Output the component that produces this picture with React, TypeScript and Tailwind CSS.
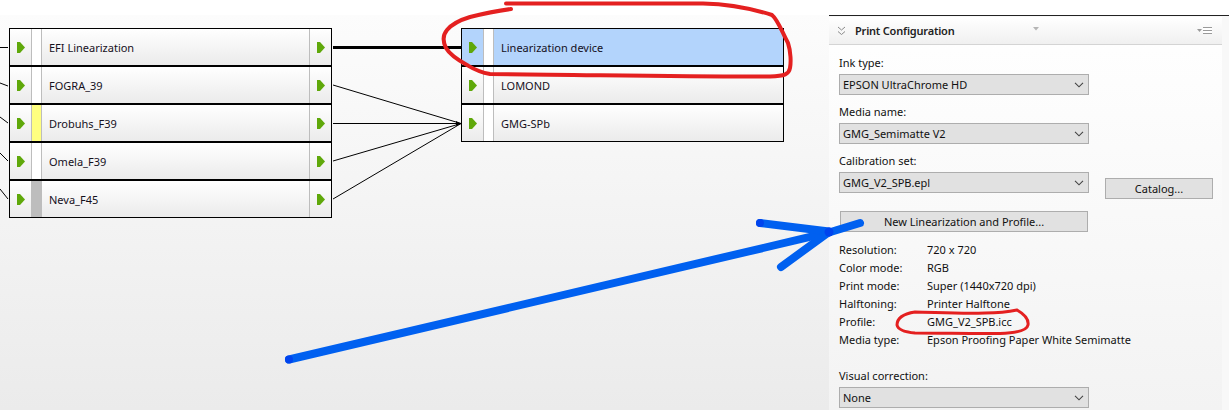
import React from "react";

const FONT = "font-['Noto_Sans','Liberation_Sans',sans-serif]";

type NodeRow = { name: string; swatch?: string; selected?: boolean };

const sourceRows: NodeRow[] = [
  { name: "EFI Linearization" },
  { name: "FOGRA_39" },
  { name: "Drobuhs_F39", swatch: "bg-[#ffff80]" },
  { name: "Omela_F39" },
  { name: "Neva_F45", swatch: "bg-[#bdbdbd]" },
];

const targetRows: NodeRow[] = [
  { name: "Linearization device", selected: true },
  { name: "LOMOND" },
  { name: "GMG-SPb" },
];

const infoRows = [
  ["Resolution:", "720 x 720"],
  ["Color mode:", "RGB"],
  ["Print mode:", "Super (1440x720 dpi)"],
  ["Halftoning:", "Printer Halftone"],
  ["Profile:", "GMG_V2_SPB.icc"],
  ["Media type:", "Epson Proofing Paper White Semimatte"],
];

const GreenArrow = () => (
  <svg width="8" height="11" viewBox="0 0 8 11" className="block">
    <path d="M0 0H3L8 5.5L3 11H0Z" fill="#5fa80a" />
  </svg>
);

const Chevron = () => (
  <svg width="10" height="6" viewBox="0 0 10 6" fill="none" className="block">
    <path d="M1 .8L5 4.8L9 .8" stroke="#444" strokeWidth="1.1" />
  </svg>
);

const NodeBlock = ({ rows, hasOutput, className }: { rows: NodeRow[]; hasOutput: boolean; className: string }) => (
  <div className={`absolute w-[323px] border border-black ${className}`}>
    {rows.map((row) => (
      <div
        key={row.name}
        className={`flex h-[38px] items-stretch border-t-2 border-black first:h-[36px] first:border-t-0 ${
          row.selected ? "bg-[#b3d4fc]" : "bg-gradient-to-b from-white to-[#ebebeb]"
        }`}
      >
        <div className="flex w-[21px] items-center justify-center pl-[1px]">
          <GreenArrow />
        </div>
        <div className={`w-[11px] border-x border-[#bdbdbd] ${row.swatch ?? "bg-white"}`} />
        <div className="flex flex-1 items-center pl-[7px] pt-[2px] text-[11px] text-[#15101c]">{row.name}</div>
        {hasOutput && (
          <div className="flex w-[22px] items-center justify-center border-l border-[#bdbdbd]">
            <GreenArrow />
          </div>
        )}
      </div>
    ))}
  </div>
);

const SelectBox = ({ value, className = "" }: { value: string; className?: string }) => (
  <div
    className={`flex h-[21px] w-[250px] items-center justify-between border border-[#adadad] bg-[#e1e1e1] pl-[3px] pr-[4px] text-[11px] text-[#111] ${className}`}
  >
    <span className="pt-[2px]">{value}</span>
    <Chevron />
  </div>
);

const FieldLabel = ({ children }: { children: React.ReactNode }) => (
  <div className="h-[18px] text-[11px] leading-[18px] text-[#111]">{children}</div>
);

const PanelHeader = () => (
  <div className="flex h-[28px] items-center border-b border-[#d4d4d4] bg-gradient-to-b from-white to-[#f0f0f0] pl-[8px] pr-[10px]">
    <svg width="9" height="10" viewBox="0 0 9 10" fill="none" className="block">
      <path d="M1 1L4.5 4L8 1M1 5.5L4.5 8.5L8 5.5" stroke="#8a8a8a" />
    </svg>
    <span className="ml-[9px] pt-[2px] text-[11px] font-semibold tracking-[-0.2px] text-[#222]">Print Configuration</span>
    <svg width="6" height="4" viewBox="0 0 6 4" className="ml-[78px] -mt-[4px] block">
      <path d="M0 0H6L3 3.5Z" fill="#b5b5b5" />
    </svg>
    <div className="ml-auto flex items-center gap-[1px]">
      <svg width="5" height="3" viewBox="0 0 5 3" className="block">
        <path d="M0 0H5L2.5 3Z" fill="#9a9a9a" />
      </svg>
      <div className="h-[7px] w-[9px] border-y border-[#9a9a9a] bg-[linear-gradient(#fff_0_2px,#9a9a9a_2px_3px,#fff_3px)]" />
    </div>
  </div>
);

const App = () => {
  return (
    <div className={`relative h-[410px] w-[1229px] overflow-hidden bg-white ${FONT}`}>
      <div className="flex h-full pt-[15px]">
        {/* diagram canvas */}
        <div className="relative w-[829px] bg-gradient-to-b from-[#fcfcfc] to-[#ebebeb]">
          <NodeBlock rows={sourceRows} hasOutput className="left-[9px] top-[13px]" />
          <NodeBlock rows={targetRows} hasOutput={false} className="left-[461px] top-[13px]" />
        </div>

        {/* print configuration */}
        <div className="flex w-[400px] flex-col border-t border-[#222] bg-[#f8f8f8]">
          <div className="mt-[1px] flex flex-1 flex-col">
            <div className="mr-[7px] flex-1 bg-gradient-to-b from-white to-[#f3f3f3]">
              <PanelHeader />
              <div className="pl-[10px] pt-[9px]">
                <FieldLabel>Ink type:</FieldLabel>
                <SelectBox value="EPSON UltraChrome HD" className="mt-[2px]" />
                <div className="mt-[8px]">
                  <FieldLabel>Media name:</FieldLabel>
                </div>
                <SelectBox value="GMG_Semimatte V2" className="mt-[2px]" />
                <div className="mt-[8px]">
                  <FieldLabel>Calibration set:</FieldLabel>
                </div>
                <div className="mt-[2px] flex items-start">
                  <SelectBox value="GMG_V2_SPB.epl" />
                  <button className="ml-[16px] mt-[6px] h-[21px] w-[108px] border border-[#adadad] bg-[#e1e1e1] pt-[2px] text-[11px] text-[#111]">
                    Catalog...
                  </button>
                </div>
                <button className="ml-[1px] mt-[12px] block h-[21px] w-[248px] border border-[#adadad] bg-[#e1e1e1] pt-[2px] text-[11px] text-[#111]">
                  New Linearization and Profile...
                </button>
                <div className="mt-[9px]">
                  {infoRows.map(([label, value]) => (
                    <div key={label} className="flex h-[18px] text-[11px] leading-[18px] text-[#111]">
                      <span className="w-[88px]">{label}</span>
                      <span>{value}</span>
                    </div>
                  ))}
                </div>
                <div className="mt-[18px]">
                  <FieldLabel>Visual correction:</FieldLabel>
                </div>
                <SelectBox value="None" className="mt-[2px]" />
              </div>
            </div>
          </div>
        </div>
      </div>

      {/* wires and hand-drawn annotations on top */}
      <svg width="1229" height="410" viewBox="0 0 1229 410" fill="none" className="pointer-events-none absolute left-0 top-0">
        <g stroke="#000">
          <path d="M0 47.5H8M0 83L8 86M0 117L8 123M0 153L8 161M0 189L8 199" />
          <path d="M333 47.5H461" strokeWidth="3" />
          <path d="M333 85L461 123.5M333 123.5H461M333 161L461 123.5M333 199L461 123.5" />
        </g>
        <path d="M456 121L461 123.5L456 126Z" fill="#000" />
        <path
          d="M506 3.5C580 4 650 3 703 3.5C725 4 750 8 772 15C778 20 782 32 788 43C791 52 791 63 790 68C789 74 785 76 770 76.5C700 77 600 75 490 74C478 72 472 68 467 65C458 60 450 55 446 48C443 42 442 36 447 30C452 24 460 20 470 17C482 14 496 11 511 9"
          stroke="#e42020"
          strokeWidth="4"
          strokeLinecap="round"
        />
        <path
          d="M1017 310C1024 314 1029 319 1028 325C1027 331 1015 333 1000 333.5C975 334 945 333 915 333C904 332 898 330 897 325C897 319 902 314 915 312C930 312 960 314 985 313C997 313 1008 312 1017 310"
          stroke="#e42020"
          strokeWidth="3"
          strokeLinecap="round"
        />
        <g stroke="#0060f0" strokeWidth="8" strokeLinecap="round">
          <path d="M289 359.5L829 232.5L860 223" />
          <path d="M760 223L829 231.5" />
          <path d="M781 267L829 232" />
        </g>
        <g fill="#0044ee">
          <circle cx="289" cy="359.5" r="4" />
          <circle cx="760" cy="223" r="4" />
          <circle cx="829" cy="232" r="4.5" />
        </g>
      </svg>
    </div>
  );
};

export default App;
